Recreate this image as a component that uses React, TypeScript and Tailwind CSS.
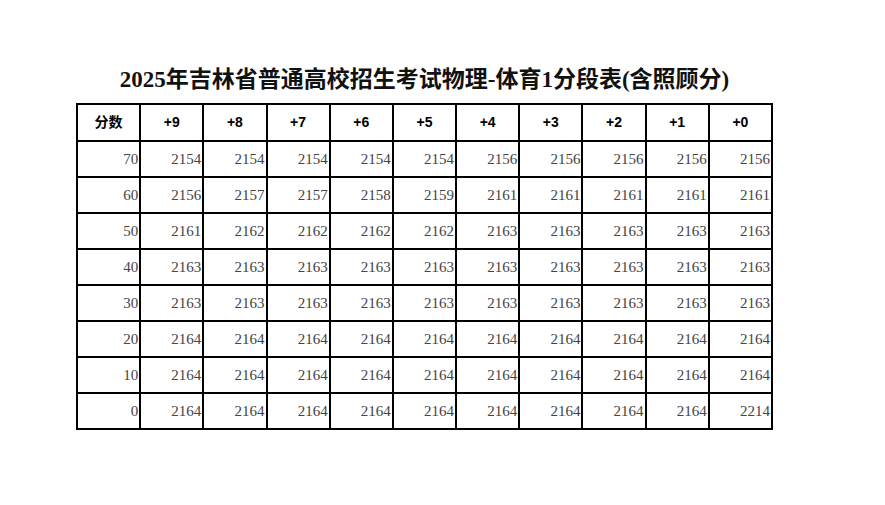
const COLS = ["+9", "+8", "+7", "+6", "+5", "+4", "+3", "+2", "+1", "+0"]

const ROWS: { score: number; values: number[] }[] = [
    { score: 70, values: [2154, 2154, 2154, 2154, 2154, 2156, 2156, 2156, 2156, 2156] },
    { score: 60, values: [2156, 2157, 2157, 2158, 2159, 2161, 2161, 2161, 2161, 2161] },
    { score: 50, values: [2161, 2162, 2162, 2162, 2162, 2163, 2163, 2163, 2163, 2163] },
    { score: 40, values: [2163, 2163, 2163, 2163, 2163, 2163, 2163, 2163, 2163, 2163] },
    { score: 30, values: [2163, 2163, 2163, 2163, 2163, 2163, 2163, 2163, 2163, 2163] },
    { score: 20, values: [2164, 2164, 2164, 2164, 2164, 2164, 2164, 2164, 2164, 2164] },
    { score: 10, values: [2164, 2164, 2164, 2164, 2164, 2164, 2164, 2164, 2164, 2164] },
    { score: 0, values: [2164, 2164, 2164, 2164, 2164, 2164, 2164, 2164, 2164, 2214] },
]

export default function App() {
    return (
        <div className="w-[885px] h-[505px] bg-white overflow-hidden">
            <div className="ml-[76px] w-[697px] pt-[65px]">
                <h1 className="text-center text-[23px] leading-[30px] font-bold text-[#111] [font-family:'Liberation_Serif','Noto_Sans_CJK_SC',serif]">
                    2025年吉林省普通高校招生考试物理-体育1分段表(含照顾分)
                </h1>
                <table className="mt-[8px] w-[697px] table-fixed border-collapse border-2 border-black">
                    <thead>
                        <tr className="h-[37px]">
                            <th className="border-2 border-black text-[14px] font-bold text-black text-center [font-family:'Liberation_Sans','Noto_Sans_CJK_SC',sans-serif]">
                                分数
                            </th>
                            {COLS.map(col => (
                                <th
                                    key={col}
                                    className="border-2 border-black text-[14px] font-bold text-black text-center [font-family:'Liberation_Sans','Noto_Sans_CJK_SC',sans-serif]"
                                >
                                    {col}
                                </th>
                            ))}
                        </tr>
                    </thead>
                    <tbody>
                        {ROWS.map(row => (
                            <tr key={row.score} className="h-[36px]">
                                <td className="border-2 border-black text-right pr-[1px] pt-[1px] text-[15px] text-[#444] [font-family:'Liberation_Serif',serif]">
                                    {row.score}
                                </td>
                                {row.values.map((v, i) => (
                                    <td
                                        key={i}
                                        className="border-2 border-black text-right pr-[1px] pt-[1px] text-[15px] text-[#444] [font-family:'Liberation_Serif',serif]"
                                    >
                                        {v}
                                    </td>
                                ))}
                            </tr>
                        ))}
                    </tbody>
                </table>
            </div>
        </div>
    )
}
